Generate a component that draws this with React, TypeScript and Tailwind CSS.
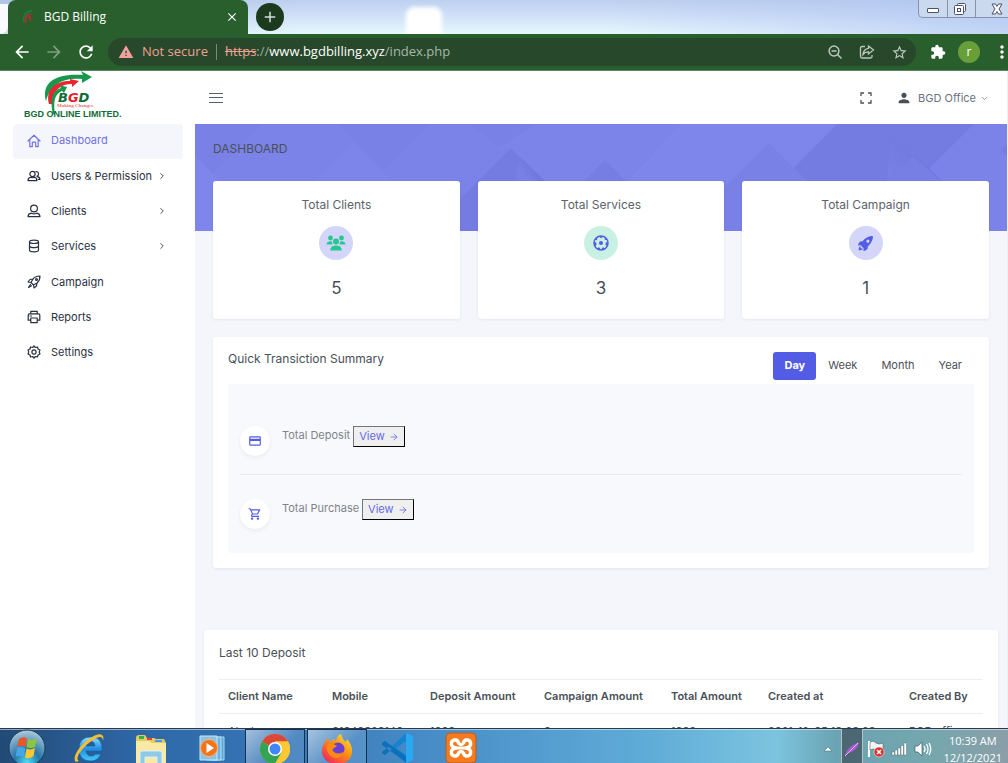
import React from "react";
import {
  MdArrowBack, MdArrowForward, MdRefresh, MdWarning, MdStarBorder, MdExtension,
  MdMoreVert, MdPerson, MdOutlineShoppingCart, MdOutlineCreditCard, MdClose, MdAdd,
} from "react-icons/md";
import { IoRocketSharp } from "react-icons/io5";
import { ArrowRight, ChevronDown, ChevronRight } from "lucide-react";

function Favicon() {
  return (
    <svg viewBox="0 0 16 16" className="size-4" aria-hidden="true">
      <path d="M4 13C2 6 6 2 12 2" fill="none" stroke="#14803f" strokeWidth="1.500" />
      <path d="M6 14C4 8 7 5 11 5M8 8H10V12" fill="none" stroke="#c9262d" strokeWidth="1.500" />
    </svg>
  );
}

function Logo() {
  return (
    <a href="#home" aria-label="BGD Online Limited" className="block">
      <svg viewBox="0 0 98 50" className="h-[50px] w-[98px]">
        <path d="M22 30C17 12 31 2 59 4L57 0L68 6L58 12V8C38 6 26 14 22 30Z" fill="#17984c" />
        <path d="M25 33C21 18 32 10 46 10V8L55 10L48 16V13C36 13 28 20 28 33Z" fill="#ec2430" />
        <path d="M29 43C25 25 30 19 37 17L35 14L43 16L40 22L38 20C31 23 29 29 31 44Z" fill="#17984c" />
        <text x="34" y="31" fontFamily="DejaVu Sans, sans-serif" fontWeight="700" fontSize="13" fontStyle="italic" fill="#126b38">
          B<tspan fill="#e8202b">G</tspan>D
        </text>
        <text x="33" y="36" fontFamily="Liberation Serif, serif" fontSize="5" fontWeight="700" fill="#ef6a70">Making Changes</text>
        <text x="0" y="46" fontFamily="Liberation Sans, sans-serif" fontWeight="700" fontSize="9" fill="#126b38">BGD ONLINE LIMITED.</text>
      </svg>
    </a>
  );
}

function BrowserChrome() {
  return (
    <header className="shrink-0 font-['Open_Sans',sans-serif]">
      <div className="relative flex h-[34px] items-end overflow-hidden bg-[linear-gradient(90deg,rgba(150,175,210,0.35),transparent_30%,transparent_60%,rgba(170,190,240,0.6)),linear-gradient(#bdd0ee,#cfe0f8_45%,#e6f8fd)]">
        <div className="absolute left-[406px] top-[7px] h-9 w-9 rounded-t-lg bg-white blur-[2px]" />
        <div className="h-[30px] w-2 self-end rounded-br-lg bg-white/90" />
        <div className="flex h-[34px] w-60 items-center rounded-t-lg bg-[#285f2d] pl-3 pr-[9px] text-white">
          <Favicon />
          <span className="ml-2 flex-1 text-[12px]">BGD Billing</span>
          <button aria-label="Close tab"><MdClose size={14} /></button>
        </div>
        <button aria-label="New tab" className="mb-[3px] ml-2 flex size-7 items-center justify-center rounded-full bg-[#1c3b1e] text-[#d5ddd5]">
          <MdAdd size={18} />
        </button>
        <div className="ml-auto flex h-[18px] self-start rounded-bl-[5px] border-b border-l border-[#8593ad] bg-[#cbd9ef]">
          <button aria-label="Minimise" className="flex w-7 items-center justify-center">
            <span className="mt-1 block h-[5px] w-3 rounded-[1px] border border-[#4a5267] bg-white" />
          </button>
          <button aria-label="Restore" className="flex w-7 items-center justify-center border-l border-[#8593ad] pr-1">
            <svg viewBox="0 0 14 14" className="size-3.5" fill="#fff" stroke="#4a5267">
              <rect x="4.500" y="1.500" width="8" height="8" rx="1" />
              <rect x="1.500" y="3.500" width="9" height="9" rx="1" />
              <rect x="4.500" y="6.500" width="3" height="3" />
            </svg>
          </button>
          <button aria-label="Close window" className="flex w-[33px] items-center justify-end border-l border-[#8593ad] pr-1">
            <svg viewBox="0 0 14 14" className="size-3.5">
              <path d="M2 2H5.500L7 4.500L8.500 2H12L9 7L12 12H8.500L7 9.500L5.500 12H2L5 7Z" fill="#fff" stroke="#4a5267" />
            </svg>
          </button>
        </div>
      </div>
      <div className="flex h-[37px] items-center border-b border-[#5b8560] bg-[#285f2d] pl-3 text-white">
        <button aria-label="Back"><MdArrowBack size={20} /></button>
        <button aria-label="Forward" className="ml-3 text-[#7d9f80]"><MdArrowForward size={20} /></button>
        <button aria-label="Reload" className="ml-3"><MdRefresh size={20} /></button>
        <div className="ml-3 flex h-7 flex-1 items-center rounded-full bg-[#27482a] pl-2.5 pr-2 text-[13px] text-[#f0a196]">
          <MdWarning size={16} className="text-[#f49f9f]" />
          <span className="ml-2">Not secure</span>
          <span className="mx-2 h-4 w-px bg-[#7c8b7d]" />
          <span className="flex-1 whitespace-nowrap">
            <span className="line-through">https</span><span className="text-[#9fb0a0]">://</span><span className="text-white">www.bgdbilling.xyz</span><span className="text-[#a9b8aa]">/index.php</span>
          </span>
          <span className="flex items-center gap-4 text-[#bcc8bd]">
            <button aria-label="Zoom">
              <svg viewBox="0 0 16 16" className="size-4" fill="none" stroke="currentColor" strokeWidth="1.500">
                <circle cx="7" cy="7" r="4.900" /><path d="M4.500 7H9.500M10.500 10.500L14.500 14.500" />
              </svg>
            </button>
            <button aria-label="Share">
              <svg viewBox="0 0 16 16" className="size-4" fill="none" stroke="currentColor" strokeWidth="1.300">
                <path d="M6 2.500H3Q1.500 2.500 1.500 4V12.500Q1.500 14 3 14H11.500Q13 14 13 12.500V11" />
                <path d="M9.500 2L14.500 6L9.500 10V7.800Q6 7.700 4 10.500Q4.500 5 9.500 4.300Z" />
              </svg>
            </button>
            <button aria-label="Bookmark"><MdStarBorder size={17} /></button>
          </span>
        </div>
        <button aria-label="Extensions" className="ml-3.5"><MdExtension size={16} /></button>
        <button aria-label="Profile" className="ml-3 flex size-[22px] items-center justify-center rounded-full bg-[#689f38] text-[12px] leading-none">r</button>
        <button aria-label="Menu" className="-mr-1 ml-3"><MdMoreVert size={20} /></button>
      </div>
    </header>
  );
}

function LineIcon({ children }: { children: React.ReactNode }) {
  return (
    <svg viewBox="0 0 14 14" className="size-3.5 shrink-0" fill="none" stroke="currentColor" strokeWidth="1.200" strokeLinejoin="round" strokeLinecap="round">
      {children}
    </svg>
  );
}

const HomeIcon = () => <LineIcon><path d="M1 7L7 1.200L13 7M2.800 5.800V12.700H5.300V9Q5.300 8.200 6 8.200H8Q8.700 8.200 8.700 9V12.700H11.200V5.800" /></LineIcon>;
const UsersIcon = () => <LineIcon><circle cx="5.500" cy="5" r="2.600" /><path d="M1 11.600Q1.200 8.500 4 8.200Q5.500 9.300 7 8.200Q9.800 8.500 10 11.600ZM9 2.600Q11.500 2.500 11.500 5Q11.500 6.600 10 7.400Q12.900 8.200 13 10.400H11.500" /></LineIcon>;
const ClientIcon = () => <LineIcon><circle cx="7" cy="4.500" r="3.400" /><path d="M1 12.600Q1.200 9.800 4.200 9.200Q7 10.400 9.800 9.200Q12.800 9.800 13 12.600Z" /></LineIcon>;
const DatabaseIcon = () => <LineIcon><path d="M2.500 3Q2.500 1.200 7 1.200Q11.500 1.200 11.500 3V11Q11.500 12.800 7 12.800Q2.500 12.800 2.500 11ZM2.500 3Q3 4.500 7 4.500Q11 4.500 11.500 3M2.500 7Q3 8.600 7 8.600Q11 8.600 11.500 7" /></LineIcon>;
const RocketIcon = () => <LineIcon><path d="M13 1Q8.500 1 6 4L3 4.500L1 7L4 7.500L6.500 10L7 13L9.500 11L10 8Q13 5.500 13 1ZM3.500 9.500L1.500 12.500L4.500 10.800M6 4L4 7.500M10 8L6.500 10" /><circle cx="9.500" cy="4.500" r=".9" /></LineIcon>;
const PrinterIcon = () => <LineIcon><path d="M3.800 3.800V1.300H10.200V3.800M3.800 10.200H1.200V5Q1.200 3.800 2.400 3.800H11.600Q12.800 3.800 12.800 5V10.200H10.200M3.800 8H10.200V12.700H3.800ZM3 6H4.500" /></LineIcon>;
const GearIcon = () => <LineIcon><circle cx="7" cy="7" r="2.100" /><path d="M7 1L8.400 2.500L10.500 2L11 4L13 5L12.200 7L13 9L11 10L10.500 12L8.400 11.500L7 13L5.600 11.500L3.500 12L3 10L1 9L1.800 7L1 5L3 4L3.500 2L5.600 2.500Z" /></LineIcon>;

const nav = [
  { label: "Dashboard", icon: HomeIcon, active: true, more: false },
  { label: "Users & Permission", icon: UsersIcon, active: false, more: true },
  { label: "Clients", icon: ClientIcon, active: false, more: true },
  { label: "Services", icon: DatabaseIcon, active: false, more: true },
  { label: "Campaign", icon: RocketIcon, active: false, more: false },
  { label: "Reports", icon: PrinterIcon, active: false, more: false },
  { label: "Settings", icon: GearIcon, active: false, more: false },
];

function Sidebar() {
  return (
    <aside className="w-[195px] shrink-0 bg-white">
      <div className="flex h-[53px] pl-6"><Logo /></div>
      <nav className="pl-[13px] pr-3">
        <ul className="grid h-[247px] auto-rows-fr">
          {nav.map(({ label, icon: Icon, active, more }) => (
            <li key={label}>
              <a
                href="#nav"
                className={
                  active
                    ? "flex h-full items-center rounded-sm bg-[#f5f6fb] pb-0.5 pl-3.5 pr-4 text-[#6f72e4]"
                    : "flex h-full items-center pb-0.5 pl-3.5 pr-4 text-[#2a3142]"
                }
              >
                <Icon />
                <span className="ml-2.5 flex-1 whitespace-nowrap">{label}</span>
                {more && <ChevronRight size={10} />}
              </a>
            </li>
          ))}
        </ul>
      </nav>
    </aside>
  );
}

function PeopleIcon() {
  return (
    <svg viewBox="0 0 20 16" className="h-4 w-5" fill="#27c692">
      <circle cx="4.500" cy="3" r="2.400" />
      <circle cx="15.500" cy="3" r="2.400" />
      <circle cx="10" cy="6.500" r="3" />
      <path d="M.5 9.500Q1 6.300 4.500 6.300Q6 6.300 6.200 7Q6 8.500 6.800 9.500Z" />
      <path d="M19.500 9.500Q19 6.300 15.500 6.300Q14 6.300 13.800 7Q14 8.500 13.200 9.500Z" />
      <path d="M4.300 15.500Q4.300 10.600 10 10.600Q15.700 10.600 15.700 15.500Z" />
    </svg>
  );
}

function BallIcon() {
  return (
    <svg viewBox="0 0 16 16" className="size-4">
      <circle cx="8" cy="8" r="7" fill="none" stroke="#525ce5" strokeWidth="1.500" />
      <g fill="#525ce5">
        <circle cx="8" cy="8" r="2" />
        <path d="M5.500 1.300H10.500L8 3.300ZM1 7L3 7.300L3.700 9.500L2 11ZM15 7L13 7.300L12.300 9.500L14 11ZM4.500 14L5.500 12.200L7.200 13L7 15ZM11.500 14L10.500 12.200L8.800 13L9 15ZM2 5L3 3L4.500 3.500L4 5ZM14 5L13 3L11.500 3.500L12 5Z" />
      </g>
    </svg>
  );
}

const stats = [
  { label: "Total Clients", value: "5", icon: <PeopleIcon />, tint: "bg-[#d4d6f9]" },
  { label: "Total Services", value: "3", icon: <BallIcon />, tint: "bg-[#c8f1e3]" },
  { label: "Total Campaign", value: "1", icon: <IoRocketSharp size={17} />, tint: "bg-[#d4d6f9]" },
];

function BannerPattern() {
  return (
    <svg viewBox="0 0 812 107" preserveAspectRatio="none" className="absolute inset-x-0 top-0 h-[107px] w-full bg-[#7c83e8]" aria-hidden="true">
      <defs>
        <linearGradient id="facet" x1="1" y1="0.3" x2="0.3" y2="0.7">
          <stop offset="0" stopColor="#676ed3" />
          <stop offset="1" stopColor="#7980e5" />
        </linearGradient>
      </defs>
      <path d="M0 0H68L0 67Z" fill="#7a81e6" />
      <path d="M143 0H235L188 46Z" fill="#7a81e6" />
      <path d="M0 32L75 107H0Z" fill="#7e86eb" />
      <path d="M158 18L247 107H69Z" fill="#7d85ea" />
      <path d="M275 0H340L306 25Z" fill="#7a81e6" />
      <path d="M340 0H485L378 107L303 24Z" fill="#7c84e9" />
      <path d="M316 24L399 107H233Z" fill="#757ce1" />
      <path d="M325 33L350 57H320Z" fill="url(#facet)" />
      <path d="M410 36L481 107H339Z" fill="#777ee3" />
      <path d="M485 0H642L535 107H378L433 57Z" fill="#7e86eb" />
      <path d="M574 19L662 107H486Z" fill="#7a81e6" />
      <path d="M642 0H779L671 107H662L599 44Z" fill="#757ce1" />
      <path d="M696 10L790 107H680L692 57Z" fill="url(#facet)" />
      <path d="M720 30L765 75L692 57Z" fill="#7379df" />
      <path d="M718 32L692 57H745Z" fill="#787fe4" />
      <path d="M812 20L806 26L812 32Z" fill="#757ce1" />
    </svg>
  );
}

function Topbar() {
  return (
    <div className="flex h-[53px] shrink-0 items-center bg-white px-3.5 pt-px text-[#5b626b]">
      <button aria-label="Toggle menu">
        <svg viewBox="0 0 14 10" className="h-2.5 w-3.5" stroke="#525f70" strokeWidth="1"><path d="M0 .5H14M0 4.500H14M0 9.500H14" /></svg>
      </button>
      <button aria-label="Full screen" className="ml-auto text-[#495057]">
        <svg viewBox="0 0 12 12" className="size-3" fill="none" stroke="currentColor" strokeWidth="1.300"><path d="M1 4V1H4M8 1H11V4M11 8V11H8M4 11H1V8" /></svg>
      </button>
      <button className="ml-6 mr-1 flex items-center text-[#6b7280]">
        <MdPerson size={16} className="text-[#495057]" />
        <span className="ml-1.5">BGD Office</span>
        <ChevronDown size={9} className="ml-1" />
      </button>
    </div>
  );
}

function SummaryRow({ icon, label }: { icon: React.ReactNode; label: string }) {
  return (
    <div className="flex items-start">
      <span className="flex size-[30px] items-center justify-center rounded-full bg-white text-[#525ce5] shadow-[0_2px_4px_rgba(15,34,58,0.06)]">{icon}</span>
      <div className="ml-3 flex items-center gap-[3px] text-[#7e848c]">
        <span className="pb-0.5">{label}</span>
        <button className="flex h-[21px] items-center border border-b-black border-l-[#767676] border-r-black border-t-[#767676] bg-[#efefef] px-[5px] text-[#666be6]">
          View <ArrowRight size={10} className="ml-1" />
        </button>
      </div>
    </div>
  );
}

const columns = [
  { title: "Client Name", width: "w-[104px]", value: "Alauk" },
  { title: "Mobile", width: "w-[98px]", value: "01840828140" },
  { title: "Deposit Amount", width: "w-[114px]", value: "1000" },
  { title: "Campaign Amount", width: "w-[127px]", value: "0" },
  { title: "Total Amount", width: "w-[97px]", value: "1000" },
  { title: "Created at", width: "w-[141px]", value: "2021-12-05 10:28:28" },
  { title: "Created By", width: "w-[83px]", value: "BGD office" },
];

function Dashboard() {
  return (
    <main className="relative flex-1 overflow-hidden">
      <BannerPattern />
      <div className="relative px-[18px]">
        <h1 className="flex h-[57px] items-center pb-2 text-[12px] text-[#495057]">DASHBOARD</h1>
        <section className="grid grid-cols-3 gap-[18px]">
          {stats.map((s) => (
            <article key={s.label} className="flex h-[138px] flex-col items-center rounded-[3px] bg-white pt-4 shadow-[0_1px_3px_rgba(15,34,58,0.08)]">
              <h2 className="text-[12px] leading-4 text-[#5b626b]">{s.label}</h2>
              <span className={`mt-[13px] flex size-[34px] items-center justify-center rounded-full text-[#525ce5] ${s.tint}`}>{s.icon}</span>
              <p className="mt-4 text-[17px] leading-6 text-[#495057]">{s.value}</p>
            </article>
          ))}
        </section>
        <section className="mt-[18px] rounded-[3px] bg-white px-[15px] pb-[15px] shadow-[0_1px_3px_rgba(15,34,58,0.08)]">
          <div className="flex h-[47px] items-start justify-between pt-[15px]">
            <h2 className="text-[12px] leading-[14px] text-[#495057]">Quick Transiction Summary</h2>
            <div className="flex h-7 text-[#495057]">
              <button className="rounded-[3px] bg-[#525ce5] px-[11px] pb-0.5 font-bold text-white">Day</button>
              <button className="px-3 pb-0.5">Week</button>
              <button className="px-3 pb-0.5">Month</button>
              <button className="px-3 pb-0.5">Year</button>
            </div>
          </div>
          <div className="rounded-[3px] bg-[#f8f9fc] px-3 pb-6 pt-[42px]">
            <div className="pb-[18px]"><SummaryRow label="Total Deposit" icon={<MdOutlineCreditCard size={14} />} /></div>
            <div className="border-t border-[#e9ebef] pt-6"><SummaryRow label="Total Purchase" icon={<MdOutlineShoppingCart size={14} />} /></div>
          </div>
        </section>
      </div>
      <section className="relative mx-[9px] mt-[62px] rounded-[3px] bg-white px-[15px] pb-4 pt-[15px] shadow-[0_1px_3px_rgba(15,34,58,0.08)]">
        <h2 className="mb-[18px] text-[12px] leading-4 text-[#495057]">Last 10 Deposit</h2>
        <table className="w-full table-fixed border-collapse text-left text-[#495057]">
          <thead>
            <tr className="h-[34px] border-y border-[#eceef4]">
              {columns.map((c) => <th key={c.title} className={`whitespace-nowrap px-[9px] font-semibold ${c.width}`}>{c.title}</th>)}
            </tr>
          </thead>
          <tbody>
            <tr className="h-[34px]">
              {columns.map((c) => <td key={c.title} className="whitespace-nowrap px-[9px]">{c.value}</td>)}
            </tr>
          </tbody>
        </table>
      </section>
    </main>
  );
}

const StartIcon = () => (
  <svg viewBox="0 0 38 38" className="size-[38px]">
    <defs><radialGradient id="orb" cx=".5" cy=".9" r=".9"><stop offset="0" stopColor="#4fe0f5" /><stop offset=".4" stopColor="#2676a8" /><stop offset="1" stopColor="#b4cbdc" /></radialGradient></defs>
    <circle cx="19" cy="19" r="18" fill="url(#orb)" stroke="#173b60" />
    <path d="M11 10Q15 7 19 9.500L17.500 18Q13 15.500 9 18Z" fill="#e8562a" />
    <path d="M20 10Q24 12 29 9.500L27 18Q23 20 18.700 18.300Z" fill="#8cc63f" />
    <path d="M9 19Q13 17 17.300 19.300L16 28Q12 25.500 7.500 28Z" fill="#45a5e6" />
    <path d="M18.500 19.500Q23 21.500 27 19L25.500 27Q21 30.500 17 28.500Z" fill="#fbc82e" />
  </svg>
);

const IeIcon = () => (
  <svg viewBox="0 0 34 34" className="size-[34px]">
    <defs><linearGradient id="ie" x2="0" y2="1"><stop stopColor="#8fe2ff" /><stop offset=".5" stopColor="#1f8de0" /><stop offset="1" stopColor="#45c9f7" /></linearGradient></defs>
    <path d="M30 20H14Q15 25 19 25Q22 25 23.500 23H29Q26 30 19 30Q7 30 7 18Q7 6 19 6Q31 6 30 20ZM14 15H23Q22.500 10.500 19 10.500Q15 10.500 14 15Z" fill="url(#ie)" stroke="#1559a5" strokeWidth=".6" />
    <path d="M4 31C-1 27 8 13 20 6C28 1 33 3 31 10C31 5 27 5 21 9C10 16 2 28 7 30Z" fill="#f6bf32" />
  </svg>
);

const FolderIcon = () => (
  <svg viewBox="0 0 34 34" className="size-[34px]">
    <path d="M2 7Q2 4 5 4H11L13 7H20L22 8H30L32 12V32H2Z" fill="#e7c865" />
    <path d="M5 5H10V8H5Z" fill="#2fb344" /><path d="M13 7H18V9H13Z" fill="#e0452d" /><path d="M21 9H28V11H21Z" fill="#3c9be8" />
    <path d="M2 10H15L18 12H32V33H2Z" fill="#fae9a4" />
    <path d="M6 34V22Q6 20 8 20H26Q28 20 28 22V34H23V26H11V34Z" fill="#8ec9e8" stroke="#d9f0fa" />
  </svg>
);

const MediaIcon = () => (
  <svg viewBox="0 0 30 30" className="size-[30px]">
    <path d="M14 4H27V27H14Z" fill="#5ba6d6" stroke="#a9d7f2" /><path d="M10 4H24V27H10Z" fill="#6db5e0" stroke="#b9e0f6" />
    <path d="M3 3H20V27H3Z" fill="#8bc3e6" stroke="#c6e6f8" />
    <circle cx="12" cy="15" r="8.500" fill="#f2731c" stroke="#fbb56e" /><path d="M9.500 10L17 15L9.500 20Z" fill="#fff" />
  </svg>
);

const ChromeIcon = () => (
  <svg viewBox="0 0 30 30" className="size-[30px]">
    <circle cx="15" cy="15" r="15" fill="#fcc934" />
    <path d="M15 15L2 7.500A15 15 0 0 1 28 7.500H15Z" fill="#d9483b" />
    <path d="M2 7.500A15 15 0 0 0 15 30L21.500 18.800L15 15Z" fill="#34a353" />
    <path d="M15 7.500H28A15 15 0 0 1 15 30L21.500 18.800Z" fill="#fcc934" />
    <circle cx="15" cy="15" r="7" fill="#fff" /><circle cx="15" cy="15" r="5.500" fill="#4285f4" />
  </svg>
);

const FirefoxIcon = () => (
  <svg viewBox="0 0 32 32" className="size-8">
    <defs><linearGradient id="fox" x1="1" y1="0" x2=".2" y2="1"><stop stopColor="#fff04a" /><stop offset=".45" stopColor="#ff980e" /><stop offset="1" stopColor="#f5215c" /></linearGradient></defs>
    <path d="M4 9L6 5L9 9L13 6L15 8Q16 2 20 1Q21 6 25 9L26 6Q32 13 31 20Q29 31 16 31Q3 31 1 19Q1 13 4 9Z" fill="url(#fox)" />
    <circle cx="17" cy="16" r="6.500" fill="#6c3fd0" />
    <path d="M6 12Q11 9 14 12Q18 12 13 15Q10 17 13 19Q17 22 22 19Q20 26 13 25Q5 22 6 12Z" fill="#ff8a16" />
  </svg>
);

const CodeIcon = () => (
  <svg viewBox="0 0 32 32" className="size-8">
    <path d="M24 1L8 16L24 31V23L14 16L24 9Z" fill="#1583cf" />
    <path d="M0 11L3 9L25 25V31L0 13ZM0 21L3 23L10 17L6 15L0 20Z" fill="#0b71bd" />
    <path d="M24 1L31 4V28L24 31Z" fill="#29a9f2" />
  </svg>
);

const XamppIcon = () => (
  <svg viewBox="0 0 32 32" className="size-8">
    <rect x="1" y="1" width="30" height="30" rx="4" fill="#f47b20" stroke="#b85c1b" />
    <path d="M11 16Q5.500 15 6.500 10.500Q7.500 7.500 11 8Q13 8.500 13.500 11Q16 14 18.500 11Q19 8.500 21 8Q24.500 7.500 25.500 10.500Q26.500 15 21 16Q26.500 17 25.500 21.500Q24.500 24.500 21 24Q19 23.500 18.500 21Q16 18 13.500 21Q13 23.500 11 24Q7.500 24.500 6.500 21.500Q5.500 17 11 16Z" fill="none" stroke="#fff" strokeWidth="3.500" strokeLinejoin="round" />
    <path d="M11 16H21" stroke="#fff" strokeWidth="3" />
  </svg>
);

const tasks = [
  { name: "Start", icon: <StartIcon />, box: "w-[54px]" },
  { name: "Internet Explorer", icon: <IeIcon />, box: "w-[70px]" },
  { name: "File Explorer", icon: <FolderIcon />, box: "w-[54px]" },
  { name: "Media Player", icon: <MediaIcon />, box: "w-[67px]" },
  { name: "Chrome", icon: <ChromeIcon />, box: "w-[60px] border-x border-t border-[#16314f] bg-[linear-gradient(135deg,rgba(255,255,255,0.55),rgba(255,255,255,0.12)_60%)]" },
  { name: "Firefox", icon: <FirefoxIcon />, box: "ml-0.5 w-[60px] border-x border-t border-[#16314f] bg-[linear-gradient(135deg,rgba(255,255,255,0.55),rgba(255,255,255,0.12)_60%)]" },
  { name: "Code", icon: <CodeIcon />, box: "w-[62px]" },
  { name: "XAMPP", icon: <XamppIcon />, box: "w-[63px]" },
];

function Taskbar() {
  return (
    <footer className="flex h-[35px] shrink-0 overflow-hidden border-t border-[#27394c] bg-[linear-gradient(90deg,#234a76,#2d66a5_13%,#3473b4_25%,#4a90c9_45%,#60add8_65%,#7cc4df_77%,#6ba3b2_83%,#74a7ae_92%,#8b9ea8)] font-['Open_Sans',sans-serif] shadow-[inset_0_1px_0_rgba(255,255,255,0.5)]">
      {tasks.map((t) => (
        <button key={t.name} aria-label={t.name} className={`flex h-[38px] shrink-0 items-center justify-center ${t.box}`}>{t.icon}</button>
      ))}
      <div className="ml-auto flex h-10 items-center text-white">
        <svg viewBox="0 0 10 6" className="h-1.5 w-2.5"><path d="M1 5L5 1L9 5Z" fill="#fff" stroke="#47626d" strokeWidth=".5" /></svg>
        <span className="ml-2 flex h-full w-[22px] items-center justify-center border-x border-[#b0c4ca] bg-[#4b6872]">
          <svg viewBox="0 0 16 16" className="size-4"><path d="M1 15Q2 6 15 1Q14 10 4 12Z" fill="#a55bd0" /><path d="M1 15L14 2" stroke="#e3b7f5" /></svg>
        </span>
        <svg viewBox="0 0 18 18" className="ml-1 size-[18px]">
          <path d="M2 1V17" stroke="#fff" strokeWidth="2" /><path d="M3 2Q7 0 9 3Q12 5 16 3V11Q12 12 9 10Q7 8 3 10Z" fill="#f1f5f6" stroke="#4d646d" strokeWidth=".6" />
          <circle cx="12" cy="12" r="5" fill="#db3030" stroke="#fff" strokeWidth=".5" /><path d="M10 10L14 14M14 10L10 14" stroke="#fff" strokeWidth="1.500" />
        </svg>
        <svg viewBox="0 0 17 14" className="ml-1.5 h-3.5 w-[17px]" fill="#fff" stroke="#3f5c66" strokeWidth=".4"><path d="M1 10H3.500V13H1ZM4 8H6.500V13H4ZM7 6H9.500V13H7ZM10 3.500H12.500V13H10ZM13 1H15.500V13H13Z" /></svg>
        <svg viewBox="0 0 18 16" className="ml-1.5 h-4 w-[18px]" fill="none" stroke="#fff" strokeWidth="1.300"><path d="M1 5H4L8 1V15L4 11H1Z" fill="#fff" stroke="#3f5c66" strokeWidth=".7" /><path d="M10 5Q12 8 10 11M12.500 3Q15.500 8 12.500 13M15 2Q18.500 8 15 14" /></svg>
        <div className="ml-3 mr-1.5 text-center text-[11px] leading-[17px]"><div>10:39 AM</div><div>12/12/2021</div></div>
      </div>
    </footer>
  );
}

export default function App() {
  return (
    <div className="flex h-screen flex-col overflow-hidden bg-[#f5f6fb] font-['Inter',sans-serif] text-[11px]">
      <BrowserChrome />
      <div className="flex min-h-0 flex-1">
        <Sidebar />
        <div className="flex min-w-0 flex-1 flex-col border-r border-[#eff0f3]">
          <Topbar />
          <Dashboard />
        </div>
      </div>
      <Taskbar />
    </div>
  );
}
